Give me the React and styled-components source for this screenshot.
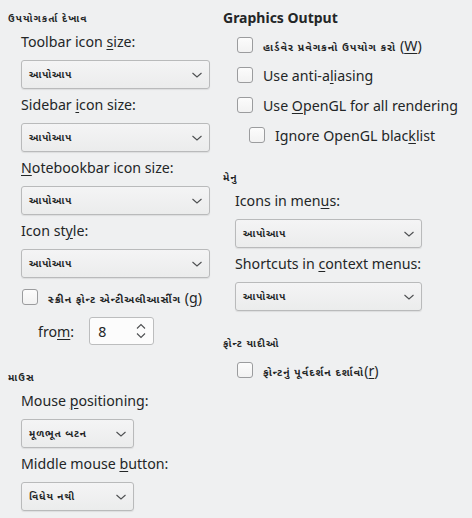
import React from 'react';
import styled, { createGlobalStyle } from 'styled-components';

const GlobalStyle = createGlobalStyle`
  html, body {
    margin: 0;
    padding: 0;
    background: #eff0f1;
  }
  body {
    font-family: "Noto Sans", "Noto Sans Gujarati", "Lohit Gujarati", "DejaVu Sans", sans-serif;
    color: #232627;
  }
`;

const Page = styled.div`
  width: 472px;
  height: 518px;
  box-sizing: border-box;
  padding: 7px 8px;
  display: grid;
  grid-template-columns: 207px 1fr;
  column-gap: 8px;
  align-items: start;
`;

const Column = styled.div`
  display: flex;
  flex-direction: column;
`;

const Section = styled.section`
  display: flex;
  flex-direction: column;
  margin-top: ${(p) => p.$top || 0}px;
`;

const Header = styled.h3`
  margin: 0 0 1px;
  height: 22px;
  line-height: 22px;
  font-size: ${(p) => (p.$small ? '10px' : '14px')};
  letter-spacing: ${(p) => (p.$small ? '1.1px' : '0')};
  font-weight: 700;
`;

const Body = styled.div`
  display: flex;
  flex-direction: column;
  padding-left: ${(p) => p.$indent || 13}px;
`;

const Label = styled.label`
  display: block;
  font-size: 14.2px;
  line-height: 22px;
  margin: ${(p) => (p.$first ? '1px' : '5px')} 0 7px;
  white-space: nowrap;
`;

const Mn = styled.span`
  text-decoration: underline;
  text-underline-offset: 2px;
`;

const Combo = styled.div`
  box-sizing: border-box;
  height: 29px;
  width: ${(p) => p.$width}px;
  display: flex;
  align-items: center;
  justify-content: space-between;
  padding: 0 6px 0 7px;
  border: 1px solid #b9babb;
  border-radius: 3px;
  background: linear-gradient(#f4f4f5, #ebecec);
  box-shadow: 0 1px 1px rgba(0, 0, 0, 0.08);
  font-size: 10px;
  font-weight: 700;
  letter-spacing: 0.9px;
`;

const Chevron = () => (
  <svg width="12" height="8" viewBox="0 0 12 8">
    <path d="M1.5 2 L6 6 L10.5 2" fill="none" stroke="#4d4f51" strokeWidth="1.1" />
  </svg>
);

const Select = ({ value, width }) => (
  <Combo $width={width}>
    <span>{value}</span>
    <Chevron />
  </Combo>
);

const CheckRow = styled.div`
  display: flex;
  align-items: center;
  height: ${(p) => p.$height || 30}px;
  margin-left: ${(p) => p.$shift || 1}px;
  margin-top: ${(p) => p.$top || 0}px;
  font-size: ${(p) => (p.$small ? '10.5px' : '14.2px')};
  font-weight: ${(p) => (p.$small ? 700 : 400)};
  letter-spacing: ${(p) => (p.$small ? '1px' : '0')};
  white-space: nowrap;
`;

const Box = styled.span`
  box-sizing: border-box;
  width: 16px;
  height: 16px;
  flex: none;
  margin-right: 10px;
  border: 1px solid #9b9c9e;
  border-radius: 3px;
  background: linear-gradient(#fcfcfc, #f2f2f2);
`;

const Check = ({ children, small, shift, height, top }) => (
  <CheckRow $small={small} $shift={shift} $height={height} $top={top}>
    <Box />
    <span>{children}</span>
  </CheckRow>
);

const Paren = styled.span`
  font-size: 14.2px;
  font-weight: 400;
  letter-spacing: 0;
`;

const SpinRow = styled.div`
  display: flex;
  align-items: center;
  margin-top: 9px;
  padding-left: 17px;
  font-size: 14.2px;
`;

const Spin = styled.div`
  box-sizing: border-box;
  width: 65px;
  height: 28px;
  margin-left: 15px;
  display: flex;
  align-items: center;
  justify-content: space-between;
  padding: 0 6px 0 8px;
  background: #fcfcfc;
  border: 1px solid #bcbdbe;
  border-radius: 3px;
`;

const SpinArrows = () => (
  <svg width="12" height="18" viewBox="0 0 12 18">
    <path d="M2 6.5 L6 2.5 L10 6.5 M2 11.5 L6 15.5 L10 11.5" fill="none" stroke="#4d4f51" strokeWidth="1.1" />
  </svg>
);

export default function App() {
  return (
    <>
      <GlobalStyle />
      <Page>
        <Column>
          <Section>
            <Header $small>ઉપયોગકર્તા દેખાવ</Header>
            <Body>
              <Label $first>Toolbar icon <Mn>s</Mn>ize:</Label>
              <Select value="આપોઆપ" width={189} />
              <Label>Sidebar <Mn>i</Mn>con size:</Label>
              <Select value="આપોઆપ" width={189} />
              <Label><Mn>N</Mn>otebookbar icon size:</Label>
              <Select value="આપોઆપ" width={189} />
              <Label>Icon st<Mn>y</Mn>le:</Label>
              <Select value="આપોઆપ" width={189} />
              <Check small height={22} top={8}>
                સ્ક્રીન ફોન્ટ એન્ટીઅલીઆસીંગ <Paren>(<Mn>g</Mn>)</Paren>
              </Check>
              <SpinRow>
                <span>fro<Mn>m</Mn>:</span>
                <Spin>
                  <span>8</span>
                  <SpinArrows />
                </Spin>
              </SpinRow>
            </Body>
          </Section>
          <Section $top={21}>
            <Header $small>માઉસ</Header>
            <Body>
              <Label $first>Mouse <Mn>p</Mn>ositioning:</Label>
              <Select value="મૂળભૂત બટન" width={113} />
              <Label>Middle mouse <Mn>b</Mn>utton:</Label>
              <Select value="વિધેય નથી" width={113} />
            </Body>
          </Section>
        </Column>
        <Column>
          <Section>
            <Header>Graphics Output</Header>
            <Body $indent={13}>
              <Check small>
                હાર્ડવેર પ્રવેગકનો ઉપયોગ કરો <Paren>(<Mn>W</Mn>)</Paren>
              </Check>
              <Check>Use anti-a<Mn>l</Mn>iasing</Check>
              <Check>Use <Mn>O</Mn>penGL for all rendering</Check>
              <Check shift={13}>Ignore OpenGL blac<Mn>k</Mn>list</Check>
            </Body>
          </Section>
          <Section $top={16}>
            <Header $small>મેનુ</Header>
            <Body $indent={12}>
              <Label $first>Icons in men<Mn>u</Mn>s:</Label>
              <Select value="આપોઆપ" width={187} />
              <Label>Shortcuts in <Mn>c</Mn>ontext menus:</Label>
              <Select value="આપોઆપ" width={187} />
            </Body>
          </Section>
          <Section $top={21}>
            <Header $small>ફોન્ટ યાદીઓ</Header>
            <Body $indent={13}>
              <Check small>
                ફોન્ટનું પૂર્વદર્શન દર્શાવો<Paren>(<Mn>r</Mn>)</Paren>
              </Check>
            </Body>
          </Section>
        </Column>
      </Page>
    </>
  );
}
